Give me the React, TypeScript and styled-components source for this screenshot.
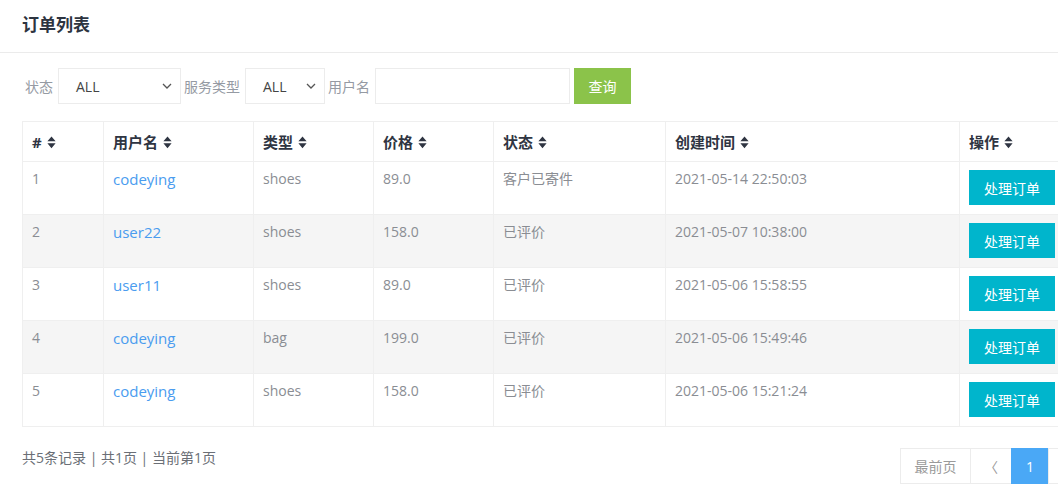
import React from 'react';
import styled, { createGlobalStyle } from 'styled-components';

const GlobalStyle = createGlobalStyle`
  html, body {
    margin: 0;
    padding: 0;
    background: #fff;
    overflow: hidden;
  }
  body {
    font-family: "Open Sans", "Noto Sans CJK SC", sans-serif;
    font-size: 14px;
    color: #333;
  }
  * {
    box-sizing: border-box;
  }
`;

interface Order {
  id: number,
  user: string,
  type: string,
  price: string,
  status: string,
  created: string,
}

const orders: Order[] = [
  { id: 1, user: 'codeying', type: 'shoes', price: '89.0', status: '客户已寄件', created: '2021-05-14 22:50:03' },
  { id: 2, user: 'user22', type: 'shoes', price: '158.0', status: '已评价', created: '2021-05-07 10:38:00' },
  { id: 3, user: 'user11', type: 'shoes', price: '89.0', status: '已评价', created: '2021-05-06 15:58:55' },
  { id: 4, user: 'codeying', type: 'bag', price: '199.0', status: '已评价', created: '2021-05-06 15:49:46' },
  { id: 5, user: 'codeying', type: 'shoes', price: '158.0', status: '已评价', created: '2021-05-06 15:21:24' },
];

const columns = [
  { title: '#', width: 81 },
  { title: '用户名', width: 150 },
  { title: '类型', width: 120 },
  { title: '价格', width: 120 },
  { title: '状态', width: 172 },
  { title: '创建时间', width: 294 },
  { title: '操作', width: undefined },
];

const Page = styled.div`
  width: 1160px;
`;

const Header = styled.div`
  height: 53px;
  padding: 13px 0 0 22px;
  border-bottom: 1px solid #ebebeb;
`;

const Title = styled.h1`
  margin: 0;
  font-size: 17px;
  line-height: 23px;
  font-weight: bold;
  color: #2d3440;
`;

const Content = styled.div`
  padding: 15px 0 0 22px;
`;

const Filters = styled.div`
  display: flex;
  align-items: center;
  height: 36px;
`;

const Label = styled.span`
  color: #959aa3;
  font-size: 14px;
  padding: 0 5px 0 3px;
`;

const SelectBox = styled.div<{ $width: number }>`
  width: ${({ $width }) => $width}px;
  height: 36px;
  border: 1px solid #ececec;
  display: flex;
  align-items: center;
  justify-content: space-between;
  padding: 0 8px 0 17px;
  color: #444;
  font-size: 14px;
`;

const TextInput = styled.div`
  width: 195px;
  height: 36px;
  border: 1px solid #ececec;
`;

const QueryButton = styled.button`
  height: 36px;
  width: 57px;
  margin-left: 4px;
  border: none;
  background: #8bc34a;
  color: #fff;
  font-family: inherit;
  font-size: 14px;
`;

const Table = styled.table`
  margin-top: 17px;
  width: 100%;
  border-collapse: collapse;
  table-layout: fixed;
  border: 1px solid #ececec;
`;

const Th = styled.th`
  height: 40px;
  padding: 0 9px;
  text-align: left;
  font-size: 15px;
  font-weight: bold;
  color: #2f3542;
  border: 1px solid #efefef;
  white-space: nowrap;
`;

const Row = styled.tr<{ $striped: boolean }>`
  background: ${({ $striped }) => ($striped ? '#f5f5f5' : '#fff')};
`;

const Td = styled.td`
  height: 53px;
  padding: 8px 9px 0;
  vertical-align: top;
  line-height: 20px;
  color: #8a8d93;
  font-size: 14px;
  border: 1px solid #efefef;
  white-space: nowrap;
`;

const CellText = styled.div`
  margin-top: -1px;
`;

const UserLink = styled.a`
  color: #4a9cef;
  text-decoration: none;
  font-size: 15px;
`;

const ActionButton = styled.button`
  width: 86px;
  height: 35px;
  border: none;
  background: #00b5cc;
  color: #fff;
  font-family: inherit;
  font-size: 14px;
`;

const Footer = styled.div`
  margin-top: 21px;
  display: flex;
  align-items: center;
  justify-content: space-between;
  height: 36px;
`;

const Summary = styled.span`
  color: #6b6f76;
  font-size: 14px;
  margin-top: -18px;
`;

const Pager = styled.div`
  display: flex;
`;

const PageItem = styled.span<{ $active?: boolean, $width: number }>`
  width: ${({ $width }) => $width}px;
  height: 36px;
  display: flex;
  align-items: center;
  justify-content: center;
  margin-left: -1px;
  border: 1px solid ${({ $active }) => ($active ? '#4aa8f6' : '#ececec')};
  background: ${({ $active }) => ($active ? '#4aa8f6' : '#fff')};
  color: ${({ $active }) => ($active ? '#fff' : '#9a9a9a')};
  font-size: 14px;
`;

const SortIcon = () => (
  <svg width="9" height="13" viewBox="0 0 9 13" style={{ marginLeft: 5, verticalAlign: -1 }}>
    <path d="M4.5 0.5 L8.6 5.3 H0.4 Z M0.4 7.3 H8.6 L4.5 12.3 Z" fill="#2f3542" />
  </svg>
);

const Chevron = () => (
  <svg width="10" height="6" viewBox="0 0 10 6">
    <path d="M1 1 L5 5 L9 1" fill="none" stroke="#555" strokeWidth="1.3" />
  </svg>
);

const App: React.FC = () => (
  <Page>
    <GlobalStyle />
    <Header>
      <Title>订单列表</Title>
    </Header>
    <Content>
      <Filters>
        <Label>状态</Label>
        <SelectBox $width={123}>
          ALL
          <Chevron />
        </SelectBox>
        <Label>服务类型</Label>
        <SelectBox $width={80}>
          ALL
          <Chevron />
        </SelectBox>
        <Label>用户名</Label>
        <TextInput />
        <QueryButton>查询</QueryButton>
      </Filters>
      <Table>
        <colgroup>
          {columns.map((col) => (
            <col key={col.title} style={col.width ? { width: col.width } : undefined} />
          ))}
        </colgroup>
        <thead>
          <tr>
            {columns.map((col) => (
              <Th key={col.title}>
                {col.title}
                <SortIcon />
              </Th>
            ))}
          </tr>
        </thead>
        <tbody>
          {orders.map((order, i) => (
            <Row key={order.id} $striped={i % 2 === 1}>
              <Td><CellText>{order.id}</CellText></Td>
              <Td><CellText><UserLink href="#">{order.user}</UserLink></CellText></Td>
              <Td><CellText>{order.type}</CellText></Td>
              <Td><CellText>{order.price}</CellText></Td>
              <Td><CellText>{order.status}</CellText></Td>
              <Td><CellText>{order.created}</CellText></Td>
              <Td><ActionButton>处理订单</ActionButton></Td>
            </Row>
          ))}
        </tbody>
      </Table>
      <Footer>
        <Summary>共5条记录 | 共1页 | 当前第1页</Summary>
        <Pager>
          <PageItem $width={71}>最前页</PageItem>
          <PageItem $width={42}>〈</PageItem>
          <PageItem $width={38} $active>1</PageItem>
          <PageItem $width={42}>〉</PageItem>
          <PageItem $width={71}>最后页</PageItem>
        </Pager>
      </Footer>
    </Content>
  </Page>
);

export default App;
